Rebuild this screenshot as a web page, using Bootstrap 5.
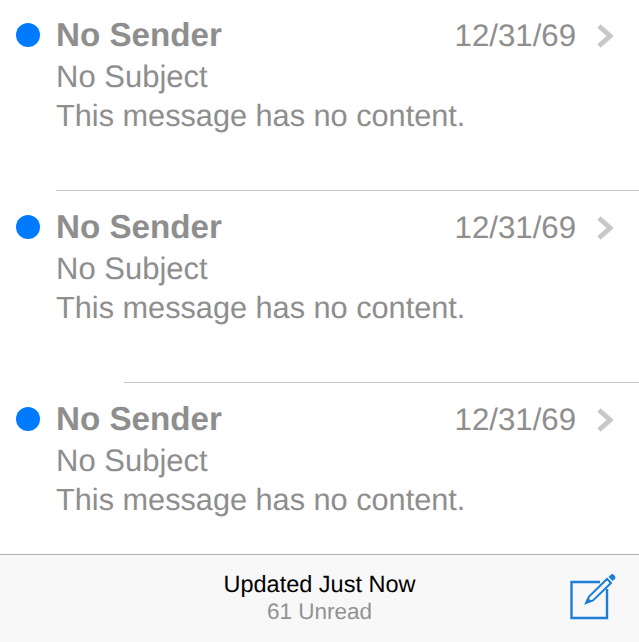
<!DOCTYPE html>
<html lang="en">
<head>
  <meta charset="UTF-8" />
  <meta name="viewport" content="width=device-width, initial-scale=1.0"/>
  <title>Mail</title>
  <link href="https://cdn.jsdelivr.net/npm/bootstrap@5.3.2/dist/css/bootstrap.min.css" rel="stylesheet">
  <style>
    body {
      font-family: "Liberation Sans", Arial, sans-serif;
      background-color: #fff;
      overflow: hidden;
      text-rendering: geometricPrecision;
    }
    .mail-screen {
      height: 642px;
    }
    .mail-row {
      height: 192px;
      padding: 15px 0 0 16px;
    }
    .mail-row:nth-child(3) {
      height: 170px;
    }
    .mail-rule {
      height: 1px;
      background-color: #c8c7cc;
      margin-top: 190px;
    }
    .mail-dot {
      width: 24px;
      height: 24px;
      margin-top: 8px;
      background-color: #007aff;
    }
    .mail-body {
      margin-left: 16px;
      color: #8e8e8e;
    }
    .mail-sender {
      font-size: 33.2px;
      line-height: 39px;
      padding-top: 1px;
      font-weight: 700;
    }
    .mail-date {
      font-size: 31.2px;
      line-height: 42px;
      margin-right: 20px;
    }
    .mail-chevron {
      width: 18px;
      height: 24px;
      margin: 9px 25px 0 0;
    }
    .mail-subject {
      font-size: 31px;
      line-height: 40px;
    }
    .mail-preview {
      font-size: 30.7px;
      line-height: 38px;
    }
    .mail-bar {
      height: 88px;
      background-color: #f8f8f8;
      border-top: 1px solid #b2b2b2;
    }
    .mail-status {
      padding-top: 14px;
    }
    .mail-updated {
      font-size: 23.5px;
      line-height: 30px;
      color: #000;
    }
    .mail-unread {
      font-size: 22.5px;
      line-height: 26px;
      color: #929292;
    }
    .mail-compose {
      right: 21px;
      top: 17px;
      width: 48px;
      height: 48px;
    }
  </style>
</head>
<body>
  <div class="mail-screen d-flex flex-column" id="screen"></div>

  <script>
    (() => {
      const screen = document.getElementById('screen');
      const indent = [56, 124, 0];
      let html = '';

      for (let i = 0; i < 3; i++) {
        html += `
        <div class="mail-row d-flex position-relative flex-shrink-0">
          <div class="mail-dot rounded-circle flex-shrink-0"></div>
          <div class="mail-body flex-grow-1">
            <div class="d-flex align-items-start">
              <div class="mail-sender flex-grow-1">No Sender</div>
              <div class="mail-date">12/31/69</div>
              <svg class="mail-chevron" viewBox="0 0 18 24"><path d="M3 2 L14 12 L3 22" fill="none" stroke="#c7c7cc" stroke-width="5"/></svg>
            </div>
            <div class="mail-subject">No Subject</div>
            <div class="mail-preview">This message has no content.</div>
          </div>
          ${indent[i] ? `<div class="mail-rule position-absolute top-0 end-0" style="left: ${indent[i]}px"></div>` : ''}
        </div>`;
      }

      html += `
        <div class="mail-bar position-relative text-center flex-shrink-0">
          <div class="mail-status">
            <div class="mail-updated">Updated Just Now</div>
            <div class="mail-unread">61 Unread</div>
          </div>
          <svg class="mail-compose position-absolute" viewBox="0 0 48 48">
            <path d="M30 10 H1.5 V46 H37 V17" fill="none" stroke="#1c7ed6" stroke-width="2.4"/>
            <path d="M16 31 L19 24.5 L37 7 L41 11 L23 28.5 Z" fill="none" stroke="#1c7ed6" stroke-width="2"/>
            <path d="M16 31 L18 26 L21.5 29 Z" fill="#1c7ed6"/>
            <path d="M38.5 5 L41 2.5 Q42.5 1.5 44 3 L45 4 Q46 5.5 45 7 L42.5 9 Z" fill="#1c7ed6"/>
          </svg>
        </div>`;

      screen.innerHTML = html;
    })();
  </script>
  <script src="https://cdn.jsdelivr.net/npm/bootstrap@5.3.2/dist/js/bootstrap.bundle.min.js"></script>
</body>
</html>
